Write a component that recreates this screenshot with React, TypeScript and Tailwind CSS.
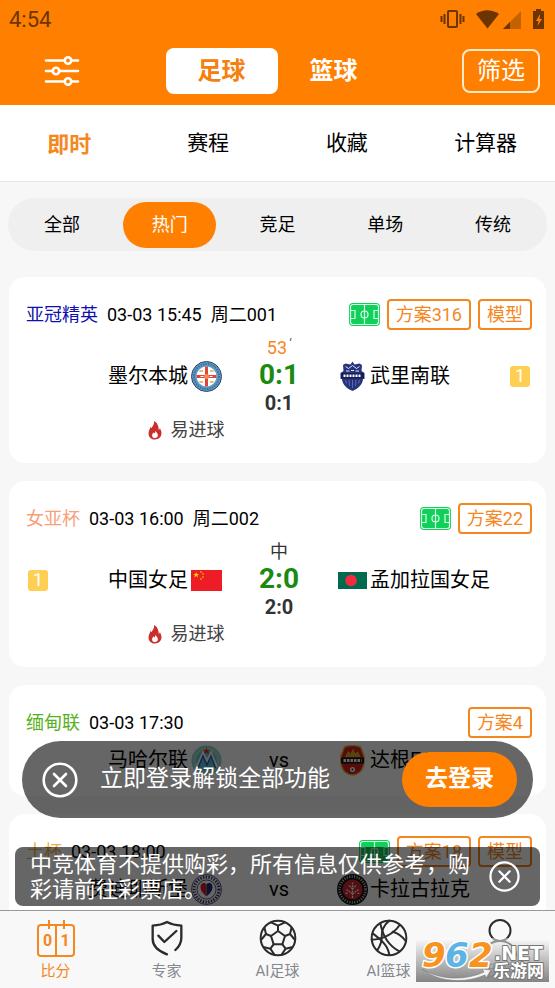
import type { ReactNode } from "react";
import clsx from "clsx";

type Match = {
  id: number;
  league: string;
  leagueClass: string;
  time: string;
  round?: string;
  pitch?: boolean;
  tags: string[];
  home: string;
  away: string;
  homeLogo: ReactNode;
  awayLogo: ReactNode;
  homeRank?: number;
  awayRank?: number;
  minute?: string;
  neutral?: boolean;
  score?: string;
  halfScore?: string;
  hint?: string;
};

/* ---------- icons ---------- */

function StatusIcons() {
  return (
    <svg width="108" height="24" viewBox="0 0 108 24" aria-hidden="true">
      <g fill="none" stroke="#6b3400" strokeWidth="2">
        <rect x="9" y="4" width="9" height="16" rx="1" />
        <path d="M5.500 7v10M21.500 7v10M2.500 9v6M24.500 9v6" />
      </g>
      <path d="M37 6.500Q48-1 60 6.500L48.500 21Z" fill="#6b3400" transform="translate(0 .5)" />
      <path d="M82 4v18H64Z" fill="#c46200" />
      <path d="M71 15v7H64Z" fill="#6b3400" />
      <path d="M97 2h5v2h3v18H94V4h3Z" fill="#6b3400" />
      <path d="M101 7l-4 7h2.500l-1 5 4.500-7h-2.500Z" fill="#ff8000" />
    </svg>
  );
}

function SlidersIcon() {
  return (
    <svg width="36" height="32" viewBox="0 0 36 32" fill="none" stroke="#fff" strokeWidth="2.600" strokeLinecap="round" aria-hidden="true">
      <path d="M2 5.500h18M28 5.500h6M2 16h6M16 16h18M2 26.500h18M28 26.500h6" />
      <circle cx="24" cy="5.500" r="3.200" />
      <circle cx="12" cy="16" r="3.200" />
      <circle cx="24" cy="26.500" r="3.200" />
    </svg>
  );
}

function PitchIcon() {
  return (
    <svg width="31" height="23" viewBox="0 0 31 23" aria-hidden="true">
      <rect width="31" height="23" rx="4" fill="#10d05a" />
      <g fill="none" stroke="#d8ffe6" strokeWidth="1.200">
        <rect x="1.500" y="1.500" width="28" height="20" rx="2.500" />
        <path d="M15.500 1.500v20M1.500 7.500h4.500v8H1.500M29.500 7.500H25v8h4.500" />
        <circle cx="15.500" cy="11.500" r="3.500" />
      </g>
    </svg>
  );
}

function FlameIcon() {
  return (
    <svg width="14" height="19" viewBox="0 0 14 19" aria-hidden="true">
      <path d="M6 0c.5 3-.8 4.500-2.200 6.400C3 7.500 2.800 6.500 2.400 5.800 2.300 8 .5 9.500.5 12.400.5 16 3.300 18.500 7 18.500s6.500-2.600 6.500-6.200c0-2.300-.9-3.600-1.600-5.300-.2 1-.5 1.600-1.100 2C10.600 5 9.500 1.700 6 0z" fill="#c9302c" />
      <path d="M7.600 9.500c.2 1.800-.8 2.200-1.300 3-.4-.3-.5-.7-.5-1.200-1 1-1.700 1.900-1.700 3.100 0 1.600 1.200 2.600 2.900 2.600s2.900-1.100 2.900-2.700c0-2-1.600-2.600-2.300-4.800z" fill="#fff" />
    </svg>
  );
}

function CloseIcon({ size }: { size: number }) {
  return (
    <svg width={size} height={size} viewBox="0 0 36 36" fill="none" stroke="#fff" strokeWidth="2.600" strokeLinecap="round" aria-hidden="true">
      <circle cx="18" cy="18" r="16.300" />
      <path d="M12 12l12 12M24 12L12 24" />
    </svg>
  );
}

function ScoreIcon() {
  return (
    <svg width="38" height="38" viewBox="0 0 38 38" aria-hidden="true">
      <g fill="none" stroke="#f5871f" strokeWidth="2">
        <rect x="1" y="6" width="36" height="31" rx="3" />
        <path d="M19 6v31M12 1v9M27 1v9" />
      </g>
      <g fill="#f5871f" fontFamily="Roboto, sans-serif" fontSize="16" fontWeight="700" textAnchor="middle">
        <text x="10.500" y="27">0</text>
        <text x="28" y="27">1</text>
      </g>
    </svg>
  );
}

function ShieldIcon() {
  return (
    <svg width="38" height="38" viewBox="0 0 114 114" fill="none" stroke="#2b2b2b" strokeWidth="7" strokeLinecap="round" strokeLinejoin="round" aria-hidden="true">
      <path d="M57 106C30 96 14 82 14 60V20C30 19 44 16 57 9c13 7 27 10 43 11v36c0 14-7 27-18 37" />
      <path d="M31 50l18 19 36-33" />
    </svg>
  );
}

function FootballIcon() {
  return (
    <svg width="38" height="38" viewBox="0 0 114 114" fill="none" stroke="#2b2b2b" strokeWidth="6" strokeLinejoin="round" aria-hidden="true">
      <circle cx="57" cy="57" r="52" />
      <path d="M57 36l21 15-8 25H44l-8-25z" />
      <path d="M57 36V20M78 51l15-6M70 76l10 13M44 76L34 89M36 51l-15-6" />
      <path d="M36 10l21 10 21-10M98 25l-5 20 15 18M101 84l-21 5-13 19M47 108L34 89l-21-5M6 63l15-18-5-20" />
    </svg>
  );
}

function BasketballIcon() {
  return (
    <svg width="38" height="38" viewBox="0 0 114 114" fill="none" stroke="#2b2b2b" strokeWidth="6" strokeLinecap="round" aria-hidden="true">
      <circle cx="57" cy="57" r="52" />
      <path d="M31 13c7 38 25 67 57 84" />
      <path d="M5 62c33-1 66-17 84-44" />
      <path d="M58 5C41 18 34 34 35 57c0 12-5 24-13 37" />
      <path d="M58 108C54 80 36 64 8 43" />
      <path d="M68 38c15 4 29 14 39 28" />
    </svg>
  );
}

function UserIcon() {
  return (
    <svg width="38" height="38" viewBox="0 0 38 38" fill="none" stroke="#2b2b2b" strokeWidth="2" strokeLinecap="round" aria-hidden="true">
      <circle cx="19" cy="11.500" r="10.500" />
      <path d="M3 37c0-9 7-15 16-15s16 6 16 15" />
    </svg>
  );
}

/* ---------- team logos ---------- */

function MelbourneLogo() {
  return (
    <svg width="31" height="31" viewBox="0 0 62 62" aria-hidden="true">
      <circle cx="31" cy="31" r="30" fill="#5c9dcc" stroke="#33475c" strokeWidth="2" />
      <circle cx="31" cy="31" r="25" fill="none" stroke="#23405f" strokeWidth="4" strokeDasharray="3 2" opacity=".5" />
      <circle cx="31" cy="31" r="20" fill="#fff" />
      <path d="M28 11h6v17h17v6H34v17h-6V34H11v-6h17z" fill="#e0433c" />
      <path d="M17 20h7M38 20h7M17 42h7M38 42h7" stroke="#e3bd78" strokeWidth="4" />
      <circle cx="31" cy="31" r="5" fill="#f08a4b" />
      <path d="M19 31h6M37 31h6" stroke="#fff" strokeWidth="2" />
    </svg>
  );
}

function BuriramLogo() {
  return (
    <svg width="25" height="30" viewBox="0 0 50 60" aria-hidden="true">
      <path d="M25 1l4 6 10-2 5 3-1 12 6 4v12h-3c-1 12-10 19-21 24C14 55 5 48 4 36H1V24l6-4L6 8l5-3 10 2z" fill="#27327c" />
      <path d="M11 11l6 4 8-6 8 6 6-4M12 20h7M31 20h7M22 19h6" stroke="#e4e6f5" strokeWidth="2" fill="none" />
      <rect x="2" y="24" width="46" height="11" fill="#151d55" />
      <path d="M7 29.500h36" stroke="#fff" strokeWidth="5" strokeDasharray="4 2" />
      <path d="M11 38l2 7M18 38l1 12M25 38v16M32 38l-1 12M39 38l-2 7" stroke="#6f79bd" strokeWidth="1.500" />
    </svg>
  );
}

function ChinaFlag() {
  return (
    <svg width="31" height="21" viewBox="0 0 31 21" aria-hidden="true">
      <rect width="31" height="21" fill="#ee1c25" />
      <path d="M5.200 2l.8 2h2.100L6.400 5.300l.7 2.100-1.900-1.300-1.900 1.300.7-2.100L2.300 4h2.100z" fill="#ffde00" />
      <g fill="#ffde00">
        <circle cx="10" cy="2" r=".8" />
        <circle cx="12" cy="4" r=".8" />
        <circle cx="12" cy="7" r=".8" />
        <circle cx="10" cy="9" r=".8" />
      </g>
    </svg>
  );
}

function BangladeshFlag() {
  return (
    <svg width="29" height="17" viewBox="0 0 29 17" aria-hidden="true">
      <rect width="29" height="17" fill="#006a4e" />
      <circle cx="13" cy="8.500" r="5.800" fill="#f42a41" />
    </svg>
  );
}

function MaharLogo() {
  return (
    <svg width="31" height="31" viewBox="0 0 62 62" aria-hidden="true">
      <circle cx="31" cy="31" r="30" fill="#7fd4dc" />
      <circle cx="31" cy="31" r="24" fill="none" stroke="#e6d96a" strokeWidth="4" strokeDasharray="3 3" />
      <circle cx="31" cy="31" r="20" fill="#5ec0d8" />
      <path d="M12 44l12-26 8 16 8-16 11 26" fill="none" stroke="#fff" strokeWidth="6" />
      <path d="M14 46l10-24 8 18 8-18 9 24" fill="none" stroke="#2a5fae" strokeWidth="3" />
      <path d="M31 5l2 5h5l-4 3 2 5-5-3-5 3 2-5-4-3h5z" fill="#e02b2b" />
    </svg>
  );
}

function DagonLogo() {
  return (
    <svg width="25" height="31" viewBox="0 0 50 62" aria-hidden="true">
      <path d="M9 4Q25-2 41 4l7 18q2 22-8 32Q25 66 10 54 0 44 2 22z" fill="#d3211c" stroke="#e8b33c" strokeWidth="3" />
      <path d="M10 24l6-12 5 5 5-10 5 10 5-5 5 12z" fill="#d9a72c" />
      <rect x="2" y="25" width="46" height="12" fill="#1c1610" />
      <path d="M7 31h36" stroke="#fff" strokeWidth="6" strokeDasharray="5 2" />
      <circle cx="25" cy="49" r="5" fill="#fff" />
      <circle cx="25" cy="49" r="2" fill="#222" />
    </svg>
  );
}

function AltinovaLogo() {
  return (
    <svg width="31" height="31" viewBox="0 0 62 62" aria-hidden="true">
      <circle cx="31" cy="31" r="30" fill="#f1f1f6" stroke="#2a2e66" strokeWidth="1.500" />
      <circle cx="31" cy="31" r="25" fill="none" stroke="#2a2e66" strokeWidth="6" strokeDasharray="2.500 3" />
      <circle cx="31" cy="31" r="19" fill="#fff" stroke="#2a2e66" strokeWidth="1.500" />
      <path d="M31 21c-5-6-13-2-12 6 1 9 7 13 12 18z" fill="#d5202d" />
      <path d="M31 21c5-6 13-2 12 6-1 9-7 13-12 18z" fill="#222b78" />
    </svg>
  );
}

function KaragumrukLogo() {
  return (
    <svg width="31" height="31" viewBox="0 0 62 62" aria-hidden="true">
      <circle cx="31" cy="31" r="31" fill="#161616" />
      <circle cx="31" cy="31" r="26" fill="none" stroke="#d9d9d9" strokeWidth="5" strokeDasharray="2 3" />
      <circle cx="31" cy="31" r="20" fill="#d0262c" />
      <path d="M31 48V17M31 40l-12-9M31 40l12-9M31 30l-8-8M31 30l8-8M21 39l-5-1M41 39l5-1" stroke="#fff" strokeWidth="2.500" strokeDasharray="4 1.500" />
    </svg>
  );
}

/* ---------- data ---------- */

const matches: Match[] = [
  {
    id: 1,
    league: "亚冠精英",
    leagueClass: "text-[#1010b0]",
    time: "03-03 15:45",
    round: "周二001",
    pitch: true,
    tags: ["方案316", "模型"],
    home: "墨尔本城",
    away: "武里南联",
    homeLogo: <MelbourneLogo />,
    awayLogo: <BuriramLogo />,
    awayRank: 1,
    minute: "53",
    score: "0:1",
    halfScore: "0:1",
    hint: "易进球",
  },
  {
    id: 2,
    league: "女亚杯",
    leagueClass: "text-[#f8a078]",
    time: "03-03 16:00",
    round: "周二002",
    pitch: true,
    tags: ["方案22"],
    home: "中国女足",
    away: "孟加拉国女足",
    homeLogo: <ChinaFlag />,
    awayLogo: <BangladeshFlag />,
    homeRank: 1,
    neutral: true,
    score: "2:0",
    halfScore: "2:0",
    hint: "易进球",
  },
  {
    id: 3,
    league: "缅甸联",
    leagueClass: "text-[#58b020]",
    time: "03-03 17:30",
    tags: ["方案4"],
    home: "马哈尔联",
    away: "达根FC",
    homeLogo: <MaharLogo />,
    awayLogo: <DagonLogo />,
  },
  {
    id: 4,
    league: "土杯",
    leagueClass: "text-[#f0b040]",
    time: "03-03 18:00",
    pitch: true,
    tags: ["方案18", "模型"],
    home: "费迪耶斯堡",
    away: "卡拉古拉克",
    homeLogo: <AltinovaLogo />,
    awayLogo: <KaragumrukLogo />,
  },
];

const tabs = ["即时", "赛程", "收藏", "计算器"];
const filters = ["全部", "热门", "竞足", "单场", "传统"];
const navItems = [
  { label: "比分", icon: <ScoreIcon /> },
  { label: "专家", icon: <ShieldIcon /> },
  { label: "AI足球", icon: <FootballIcon /> },
  { label: "AI篮球", icon: <BasketballIcon /> },
  { label: "我的", icon: <UserIcon /> },
];

/* ---------- parts ---------- */

function Rank({ value }: { value: number }) {
  return (
    <span className="flex h-[21px] w-5 items-center justify-center rounded-[3px] bg-[#ffcf54] text-lg leading-none text-white">
      {value}
    </span>
  );
}

function MatchCard({ match }: { match: Match }) {
  const live = Boolean(match.score);

  return (
    <article className="rounded-2xl bg-white pt-[22px] pb-5">
      <div className="flex h-[31px] items-center justify-between pr-3.5 pl-[17px] text-lg">
        <div className="flex gap-[9px] whitespace-nowrap">
          <span className={match.leagueClass}>{match.league}</span>
          <span>{match.time}</span>
          {match.round && <span>{match.round}</span>}
        </div>
        <div className="flex items-center gap-[7px]">
          {match.pitch && <PitchIcon />}
          {match.tags.map((tag) => (
            <button key={tag} className="h-[31px] rounded border-2 border-[#f5871f] px-[7px] leading-[27px] text-[#f5871f]">
              {tag}
            </button>
          ))}
        </div>
      </div>

      <div className="mt-1.5 grid grid-cols-[1fr_114px_1fr] items-center pr-4 pl-[19px]">
        <div className="flex items-center justify-between">
          <span>{match.homeRank && <Rank value={match.homeRank} />}</span>
          <span className="flex items-center gap-[3px] text-xl leading-[30px]">
            {match.home}
            {match.homeLogo}
          </span>
        </div>

        {live ? (
          <div className="text-center text-[#333]">
            <p className="h-6 text-lg leading-6">
              {match.minute && (
                <>
                  <span className="text-[#f5871f]">{match.minute}</span>
                  <sup className="ml-0.5 text-xs italic">′</sup>
                </>
              )}
              {match.neutral && "中"}
            </p>
            <p className="text-[28px] leading-[30px] font-bold text-[#1a8a10]">{match.score}</p>
            <p className="text-xl leading-[26px] font-bold">{match.halfScore}</p>
          </div>
        ) : (
          <p className="text-center text-xl leading-[32px]">vs</p>
        )}

        <div className="flex items-center justify-between">
          <span className="flex items-center gap-0.5 text-xl leading-[30px] whitespace-nowrap">
            <span className="flex w-8 justify-center">{match.awayLogo}</span>
            {match.away}
          </span>
          {match.awayRank && <Rank value={match.awayRank} />}
        </div>
      </div>

      {match.hint && (
        <p className="mt-px flex h-[26px] w-1/2 items-center justify-end gap-[9px] pr-[53px] text-lg text-[#444]">
          <FlameIcon />
          {match.hint}
        </p>
      )}
    </article>
  );
}

function Watermark() {
  return (
    <div className="pointer-events-none absolute right-1.5 bottom-1.5 h-11 w-[133px] bg-linear-to-b from-white/50 to-[#707070]/85">
      <svg className="overflow-visible" width="133" height="44" viewBox="0 0 133 44" role="img" aria-label="962.NET">
        <path d="M6 31c18 11 42 12 62 3l-2-3 9 1-5 8-1-3C48 46 22 44 6 31z" fill="#f4f4f4" stroke="#777" strokeWidth=".6" />
        <g fontFamily="'DejaVu Sans', sans-serif" fontWeight="700" fontStyle="italic" fontSize="34" stroke="#fff" strokeWidth="3" strokeLinejoin="round" paintOrder="stroke">
          <text x="6" y="29" fill="#f7931e">9</text>
          <text x="29" y="29" fill="#5bb4e5">6</text>
          <text x="53" y="29" fill="#f7931e">2</text>
        </g>
        <g fill="#fff" stroke="#777" strokeWidth="2" strokeLinejoin="round" paintOrder="stroke" fontWeight="700">
          <text x="78" y="22" fontFamily="'DejaVu Sans', sans-serif" fontSize="19">.NET</text>
          <text x="77" y="39" fontFamily="'Noto Sans CJK SC', sans-serif" fontSize="17">乐游网</text>
        </g>
      </svg>
    </div>
  );
}

export default function App() {
  return (
    <div className="relative flex h-screen flex-col overflow-hidden bg-[#f7f7f7] font-['Roboto','Noto_Sans_CJK_SC',sans-serif] text-black">
      {/* Header */}
      <header className="bg-[#ff8000] pb-[11px]">
        <div className="flex h-[38px] items-center justify-between pr-2 pl-[9px]">
          <span className="text-[22px] text-[#6b3400]">4:54</span>
          <StatusIcons />
        </div>
        <div className="mt-2.5 grid grid-cols-[1fr_auto_1fr] items-center">
          <button className="ml-11 justify-self-start" aria-label="设置">
            <SlidersIcon />
          </button>
          <div className="flex text-2xl font-bold">
            <button className="h-[46px] w-28 rounded-lg bg-white text-[#f5800f]">足球</button>
            <button className="h-[46px] w-28 text-white">篮球</button>
          </div>
          <button className="mr-[15px] h-11 w-[78px] justify-self-end rounded-lg border-2 border-[#ffe9c8] text-2xl text-white">
            筛选
          </button>
        </div>
      </header>

      {/* Tabs */}
      <div className="grid h-[77px] shrink-0 grid-cols-4 border-b border-[#e8e8e8] bg-white pt-0.5 text-[21px]">
        {tabs.map((tab, i) => (
          <button key={tab} className={clsx(i === 0 && "text-[22px] font-bold text-[#f5871f]")}>
            {tab}
          </button>
        ))}
      </div>

      <main className="relative min-h-0 flex-1 overflow-hidden">
        {/* Filters */}
        <div className="mx-2 mt-4 grid h-[53px] grid-cols-5 items-center justify-items-center rounded-full bg-[#efefef] text-lg">
          {filters.map((filter, i) => (
            <button
              key={filter}
              className={clsx("h-[46px] w-[93px] rounded-full", i === 1 && "bg-[#ff8000] text-white")}
            >
              {filter}
            </button>
          ))}
        </div>

        {/* Matches */}
        <div className="mx-[9px] mt-[26px] flex flex-col gap-[18px]">
          {matches.map((match) => (
            <MatchCard key={match.id} match={match} />
          ))}
        </div>

        {/* Login prompt and notice */}
        <div className="absolute inset-x-0 bottom-1 flex flex-col gap-[29px] text-white">
          <div className="mx-[22px] flex h-[77px] items-center rounded-full bg-black/60 pr-4 pl-5">
            <button aria-label="关闭">
              <CloseIcon size={36} />
            </button>
            <p className="ml-[22px] flex-1 text-[23px]">立即登录解锁全部功能</p>
            <button className="h-[55px] w-[115px] rounded-full bg-[#ff8000] text-[23px] font-bold">去登录</button>
          </div>
          <div className="mx-[15px] flex h-[59px] items-center justify-between rounded-lg bg-black/60 pr-5 pl-[15px]">
            <p className="w-[442px] text-[22px] leading-[25px]">中竞体育不提供购彩，所有信息仅供参考，购彩请前往彩票店。</p>
            <button aria-label="关闭">
              <CloseIcon size={31} />
            </button>
          </div>
        </div>
      </main>

      {/* Bottom navigation */}
      <nav className="grid h-[78px] shrink-0 grid-cols-5 border-t border-[#999] bg-[#f8f8f8] text-[15px]">
        {navItems.map((item, i) => (
          <a
            key={item.label}
            href="#"
            className={clsx("flex flex-col items-center pt-2", i === 0 ? "text-[#f5871f]" : "text-[#85888e]")}
          >
            {item.icon}
            <span className="mt-0.5 leading-6">{item.label}</span>
          </a>
        ))}
      </nav>

      <Watermark />
    </div>
  );
}
